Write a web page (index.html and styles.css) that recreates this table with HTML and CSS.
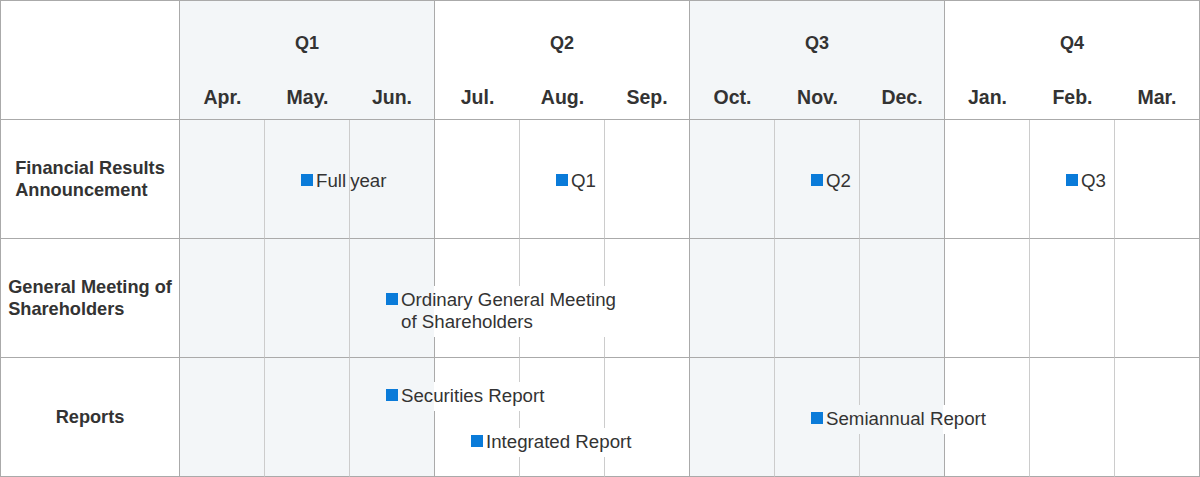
FILE: index.html
```html
<!DOCTYPE html>
<html lang="en">
<head>
<meta charset="utf-8">
<title>IR Calendar</title>
<link rel="stylesheet" href="styles.css">
</head>
<body>
<div class="schedule">
  <div class="corner"></div>
  <div class="qtr shaded">Q1</div>
  <div class="qtr">Q2</div>
  <div class="qtr shaded">Q3</div>
  <div class="qtr">Q4</div>

  <div class="mon shaded">Apr.</div>
  <div class="mon shaded">May.</div>
  <div class="mon shaded qend">Jun.</div>
  <div class="mon">Jul.</div>
  <div class="mon">Aug.</div>
  <div class="mon qend">Sep.</div>
  <div class="mon shaded">Oct.</div>
  <div class="mon shaded">Nov.</div>
  <div class="mon shaded qend">Dec.</div>
  <div class="mon">Jan.</div>
  <div class="mon">Feb.</div>
  <div class="mon last">Mar.</div>

  <!-- Financial Results -->
  <div class="rowlabel"><span>Financial Results<br>Announcement</span></div>
  <div class="cell shaded"></div>
  <div class="cell shaded">
    <div class="ev top-mid"><i class="sq"></i><span class="ev-text"><span class="w bg-shade">Full</span><span class="w bg-shade">year</span></span></div>
  </div>
  <div class="cell shaded qend"></div>
  <div class="cell"></div>
  <div class="cell">
    <div class="ev top-mid"><i class="sq"></i><span class="ev-text">Q1</span></div>
  </div>
  <div class="cell qend"></div>
  <div class="cell shaded"></div>
  <div class="cell shaded">
    <div class="ev top-mid"><i class="sq"></i><span class="ev-text">Q2</span></div>
  </div>
  <div class="cell shaded qend"></div>
  <div class="cell"></div>
  <div class="cell">
    <div class="ev top-mid"><i class="sq"></i><span class="ev-text">Q3</span></div>
  </div>
  <div class="cell last"></div>

  <!-- General Meeting -->
  <div class="rowlabel"><span>General Meeting of<br>Shareholders</span></div>
  <div class="cell shaded"></div>
  <div class="cell shaded"></div>
  <div class="cell shaded qend">
    <div class="ev top-mid cover-q1"><i class="sq"></i><span class="ev-text">Ordinary General Meeting<br>of Shareholders</span></div>
  </div>
  <div class="cell"></div>
  <div class="cell"></div>
  <div class="cell qend"></div>
  <div class="cell shaded"></div>
  <div class="cell shaded"></div>
  <div class="cell shaded qend"></div>
  <div class="cell"></div>
  <div class="cell"></div>
  <div class="cell last"></div>

  <!-- Reports -->
  <div class="rowlabel"><span>Reports</span></div>
  <div class="cell shaded"></div>
  <div class="cell shaded"></div>
  <div class="cell shaded qend">
    <div class="ev top-high cover-q1"><i class="sq"></i><span class="ev-text">Securities Report</span></div>
  </div>
  <div class="cell">
    <div class="ev top-low cover-white"><i class="sq"></i><span class="ev-text">Integrated Report</span></div>
  </div>
  <div class="cell"></div>
  <div class="cell qend"></div>
  <div class="cell shaded"></div>
  <div class="cell shaded">
    <div class="ev top-mid cover-q3"><i class="sq"></i><span class="ev-text">Semiannual Report</span></div>
  </div>
  <div class="cell shaded qend"></div>
  <div class="cell"></div>
  <div class="cell"></div>
  <div class="cell last"></div>
</div>
</body>
</html>
```

FILE: styles.css
```css
* {
  box-sizing: border-box;
}

html, body {
  margin: 0;
  padding: 0;
  background: #ffffff;
}

body {
  font-family: "Liberation Sans", Arial, sans-serif;
  color: #333333;
}

.schedule {
  display: grid;
  grid-template-columns: 179px repeat(12, 85px);
  grid-template-rows: 74px 45px repeat(3, 119px);
  width: 1200px;
  border-top: 1px solid #aaaaaa;
  border-left: 1px solid #aaaaaa;
}

.shaded {
  background: #f3f6f8;
}

.corner {
  grid-row: 1 / 3;
  grid-column: 1;
  border-right: 1px solid #aaaaaa;
  border-bottom: 1px solid #aaaaaa;
}

.qtr {
  grid-column: span 3;
  border-right: 1px solid #aaaaaa;
  text-align: center;
  font-weight: bold;
  font-size: 18px;
  line-height: 22px;
  padding-top: 31px;
}

.mon {
  border-bottom: 1px solid #aaaaaa;
  text-align: center;
  font-weight: bold;
  font-size: 19.5px;
  line-height: 22px;
  padding-top: 11px;
}

.mon.qend,
.mon.last {
  border-right: 1px solid #aaaaaa;
}

.rowlabel {
  display: flex;
  align-items: center;
  justify-content: center;
  border-right: 1px solid #aaaaaa;
  border-bottom: 1px solid #aaaaaa;
  font-weight: bold;
  font-size: 18.2px;
  line-height: 22px;
  padding: 0 2px;
}

.rowlabel span {
  display: inline-block;
  text-align: left;
}

.cell {
  border-right: 1px solid #cccccc;
  border-bottom: 1px solid #aaaaaa;
  min-width: 0;
}

.cell.qend,
.cell.last {
  border-right-color: #aaaaaa;
}

.ev {
  position: relative;
  z-index: 1;
  display: flex;
  align-items: flex-start;
  width: max-content;
  margin-left: 36px;
  padding: 3px 0 4px;
  font-size: 18.7px;
  line-height: 22px;
  white-space: nowrap;
}

.top-mid {
  margin-top: 47px;
}

.top-high {
  margin-top: 24px;
}

.top-low {
  margin-top: 70px;
}

.sq {
  display: block;
  flex: none;
  width: 12px;
  height: 12px;
  margin: 4px 3px 0 0;
  background: #0a7bd9;
}

.ev-text {
  display: block;
}

.w {
  display: inline-block;
}

.w + .w {
  margin-left: 4px;
}

.bg-shade {
  background: #f3f6f8;
}

.cover-q1 {
  background: linear-gradient(to right, #f3f6f8 0, #f3f6f8 48px, #ffffff 48px);
}

.cover-white {
  background: #ffffff;
}

.cover-q3 {
  background: linear-gradient(to right, #f3f6f8 0, #f3f6f8 132px, #ffffff 132px);
}
```
